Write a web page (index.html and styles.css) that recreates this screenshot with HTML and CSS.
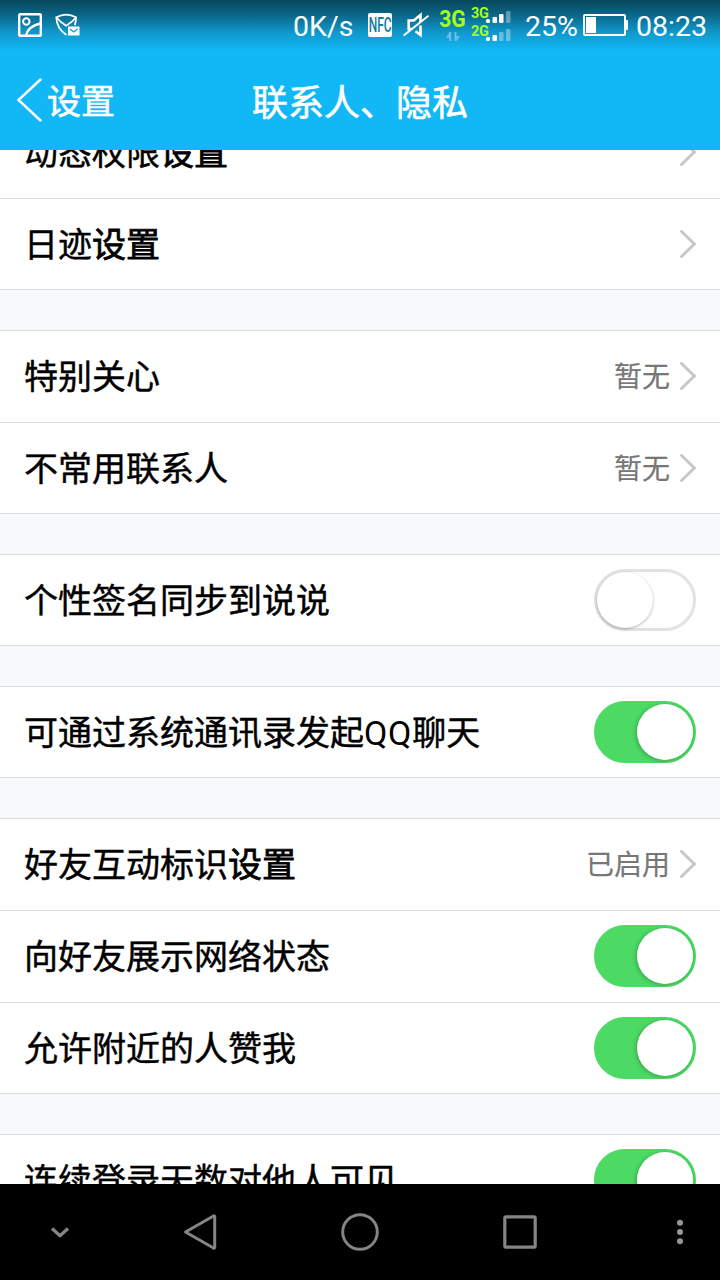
FILE: index.html
```
<!DOCTYPE html>
<html lang="zh-CN">
<head>
  <meta charset="UTF-8">
  <meta name="viewport" content="width=device-width, initial-scale=1.0">
  <title>联系人、隐私</title>
  <link rel="stylesheet" href="styles.css">
</head>
<body>
  <svg class="defs" width="0" height="0">
    <symbol id="arrow" viewBox="0 0 16 28">
      <path d="M1.500 1.500L14.300 14 1.500 26.500" fill="none" stroke="#c7c7c7" stroke-width="3" stroke-linecap="round"/>
    </symbol>
  </svg>
  <div class="screen">
    <header class="header">
      <div class="status-bar">
        <svg class="icon-picture" width="24" height="24" viewBox="0 0 24 24" fill="none" stroke="#fff">
          <rect x="1.200" y="1.200" width="21.600" height="21.600" rx="1" stroke-width="2.400"/>
          <circle cx="8.300" cy="8.500" r="3.200" stroke-width="2"/>
          <path d="M8 22c1.500-5.500 6-9.500 14-11.500" stroke-width="2.400"/>
        </svg>
        <svg class="icon-mail" width="25" height="24" viewBox="0 0 25 24" fill="none" stroke="#fff" stroke-width="1.800">
          <path d="M11.500 22C5.500 18 1.500 11 1.300 4.200 8 .7 14.500.7 21 4.200c0 3-.3 5.500-1.200 8"/>
          <path d="M1.500 4.500c2.500 3 6 6 9.700 8.300 3.700-2.300 7.300-5.300 9.800-8.300" stroke-width="1.800"/>
          <rect x="13" y="13.500" width="11.500" height="9" fill="#fff" stroke="none"/>
          <path d="M15 16l3.800 3 3.700-3" stroke="#1498cc" stroke-width="1.300"/>
        </svg>
        <span class="status-text speed">0K/s</span>
        <span class="nfc"><span>NFC</span></span>
        <svg class="icon-mute" width="26" height="26" viewBox="0 0 26 26" fill="none" stroke="#fff" stroke-width="2.600">
          <path d="M8.500 17H5.700V8.500h5L17.500 3v7M17.500 13.500V23l-5-3.700"/>
          <path d="M.7 23.500L25.500 3.700" stroke-width="2"/>
        </svg>
        <div class="network">
          <span class="net-main">3G</span>
          <svg width="14" height="10" viewBox="0 0 14 10" fill="#68bfe5">
            <path d="M3.300 0h2v9h-2V6H0zM8.500 0h2v4H14l-3.500 5h-2z"/>
          </svg>
        </div>
        <div class="sims">
          <div class="sim">
            <span class="net-sub">3G</span>
            <svg width="25" height="13" viewBox="0 0 25 13" fill="#fff">
              <rect x="0" y="8" width="4" height="4" rx="1.500"/>
              <rect x="6.500" y="6" width="4.500" height="6" rx="1"/>
              <rect x="13" y="3" width="4.500" height="9" rx="1"/>
              <rect x="20" y="0" width="4.500" height="12" rx="1" opacity=".35"/>
            </svg>
          </div>
          <div class="sim">
            <span class="net-sub">2G</span>
            <svg width="25" height="13" viewBox="0 0 25 13" fill="#fff">
              <rect x="0" y="8" width="4" height="4" rx="1.500"/>
              <rect x="6.500" y="6" width="4.500" height="6" rx="1"/>
              <rect x="13" y="3" width="4.500" height="9" rx="1" opacity=".35"/>
              <rect x="20" y="0" width="4.500" height="12" rx="1" opacity=".35"/>
            </svg>
          </div>
        </div>
        <span class="status-text percent">25%</span>
        <svg class="icon-battery" width="45" height="22" viewBox="0 0 45 22">
          <rect x="1" y="1" width="41" height="20" rx="1" fill="none" stroke="#fff" stroke-width="2"/>
          <rect x="3" y="3" width="10" height="16" fill="#fff"/>
          <rect x="42" y="6" width="3" height="10" rx="1" fill="#fff"/>
        </svg>
        <span class="status-text clock">08:23</span>
      </div>
      <div class="title-bar">
        <a class="back">
          <svg width="25" height="44" viewBox="0 0 25 44" fill="none" stroke="#fff" stroke-width="2.400" stroke-linecap="round">
            <path d="M23.500 1.500L1.500 22l22 20.500"/>
          </svg>
          <span>设置</span>
        </a>
        <h1>联系人、隐私</h1>
      </div>
    </header>

    <main class="list">
      <section class="group">
        <div class="row"><span class="label">动态权限<b>设置</b></span><svg class="arrow"><use href="#arrow"/></svg></div>
        <div class="row"><span class="label">日迹<b>设置</b></span><svg class="arrow"><use href="#arrow"/></svg></div>
      </section>
      <section class="group">
        <div class="row"><span class="label">特别关心</span><span class="value">暂无</span><svg class="arrow"><use href="#arrow"/></svg></div>
        <div class="row"><span class="label">不常用联系人</span><span class="value">暂无</span><svg class="arrow"><use href="#arrow"/></svg></div>
      </section>
      <section class="group">
        <div class="row"><span class="label">个性签名同步到说说</span><span class="switch"></span></div>
      </section>
      <section class="group">
        <div class="row"><span class="label">可通过系统通讯录发起<span class="latin">QQ</span>聊天</span><span class="switch on"></span></div>
      </section>
      <section class="group">
        <div class="row"><span class="label">好友互动标识<b>设置</b></span><span class="value">已启用</span><svg class="arrow"><use href="#arrow"/></svg></div>
        <div class="row"><span class="label">向好友展示网络状态</span><span class="switch on"></span></div>
        <div class="row"><span class="label">允许附近的人赞我</span><span class="switch on"></span></div>
      </section>
      <section class="group">
        <div class="row"><span class="label">连续登录天数对他人可见</span><span class="switch on"></span></div>
      </section>
    </main>

    <nav class="nav-bar">
      <svg viewBox="0 0 40 40"><path d="M12 16.500l8 7.300 8-7.300" stroke-width="3.200"/></svg>
      <svg viewBox="0 0 40 40"><path d="M33.500 4L5.500 20l28 16c.7.300 1.200 0 1.200-.8V4.800c0-.8-.5-1.100-1.200-.8z" stroke-width="3"/></svg>
      <svg viewBox="0 0 40 40"><circle cx="20" cy="20" r="17.300" stroke-width="3"/></svg>
      <svg viewBox="0 0 40 40"><rect x="4.800" y="4.800" width="30.400" height="30.400" rx="1.500" stroke-width="3.200"/></svg>
      <svg viewBox="0 0 40 40" class="dots"><circle cx="20" cy="10.700" r="3"/><circle cx="20" cy="20" r="3"/><circle cx="20" cy="29.300" r="3"/></svg>
    </nav>
  </div>
</body>
</html>
```
FILE: styles.css
```
* {
  box-sizing: border-box;
}
body {
  margin: 0;
  font-family: Roboto, "Noto Sans CJK SC", sans-serif;
  background: #000;
}
.defs {
  display: block;
}
.screen {
  width: 720px;
  height: 1280px;
  display: flex;
  flex-direction: column;
  overflow: hidden;
}

/* header */
.header {
  flex: none;
  height: 150px;
  color: #fff;
  background: linear-gradient(#06475a 0, #0a6485 14px, #1097ca 32px, #12b7f5 50px);
}
.status-bar {
  height: 50px;
  display: flex;
  align-items: center;
  padding-left: 18px;
}
.status-bar svg {
  flex: none;
  display: block;
}
.icon-mail {
  margin-left: 13px;
}
.status-text {
  flex: none;
  font-size: 28.500px;
  line-height: 50px;
  padding-top: 3px;
  white-space: nowrap;
}
.speed {
  width: 60px;
  margin-left: 213px;
}
.nfc {
  flex: none;
  width: 24px;
  height: 24px;
  margin-left: 15px;
  border-radius: 2px;
  background: #fff;
  color: #12799f;
  font-size: 20px;
  font-weight: 500;
  line-height: 25px;
  display: flex;
  justify-content: center;
}
.nfc span {
  transform: scaleX(.6);
}
.icon-mute {
  margin-left: 11px;
}
.network {
  flex: none;
  width: 28px;
  height: 50px;
  margin-left: 9px;
  padding-top: 7px;
  display: flex;
  flex-direction: column;
  align-items: center;
}
.network svg {
  margin-left: 2px;
}
.net-main {
  color: #a4ff1c;
  font-size: 23px;
  font-weight: 700;
  line-height: 25px;
  transform: scaleX(.92);
}
.sims {
  flex: none;
  width: 41px;
  height: 50px;
  margin-left: 5px;
  padding-top: 6px;
}
.sim {
  height: 18px;
  display: flex;
  align-items: flex-end;
}
.sim svg {
  margin-left: -2px;
}
.net-sub {
  width: 17px;
  color: #a4ff1c;
  font-size: 14.500px;
  font-weight: 700;
  line-height: 16px;
  padding-bottom: 2px;
  letter-spacing: -.3px;
}
.percent {
  width: 53px;
  margin-left: 13px;
}
.icon-battery {
  margin-left: 5px;
}
.clock {
  margin-left: 8px;
}
.title-bar {
  height: 100px;
  display: grid;
  grid-template-columns: 1fr auto 1fr;
  align-items: center;
}
.back {
  display: flex;
  align-items: center;
  padding-left: 17px;
  font-size: 34px;
  line-height: 48px;
}
.back span {
  margin-left: 5px;
  padding-top: 3px;
  -webkit-text-stroke: .6px;
}
h1 {
  margin: 0;
  font-size: 36px;
  font-weight: 400;
  line-height: 50px;
  padding-top: 7px;
  -webkit-text-stroke: .6px;
}

/* settings list */
.list {
  flex: 1;
  min-height: 0;
  overflow: hidden;
  background: #f7f9fb;
}
.group {
  margin-bottom: 40px;
  border-top: 1px solid #dadbdf;
  background: #fff;
}
.group:first-child {
  margin-top: -44px;
}
.row {
  height: 92px;
  padding: 0 24px;
  display: flex;
  align-items: center;
  border-bottom: 1px solid #dadbdf;
}
.row:last-child {
  height: 91px;
}
.label {
  flex: 1;
  color: #000;
  font-size: 34px;
  line-height: 50px;
  padding-top: 1px;
  -webkit-text-stroke: .45px;
}
.row:last-child .label {
  padding-top: 2px;
}
.label b {
  font-weight: 400;
  -webkit-text-stroke: .8px;
}
.latin {
  letter-spacing: .7px;
  -webkit-text-stroke: 0;
}
.value {
  color: #777;
  font-size: 28px;
  line-height: 40px;
  padding-top: 3px;
  -webkit-text-stroke: .2px;
}
.arrow {
  flex: none;
  width: 16px;
  height: 28px;
  margin: 0 0 1px 10px;
}
.switch {
  width: 102px;
  height: 62px;
  margin-bottom: 1px;
  border-radius: 31px;
  border: 3px solid #e2e2e2;
  background: #fff;
  display: flex;
}
.row:last-child .switch {
  margin-bottom: 0;
}
.switch::before {
  content: "";
  width: 56px;
  height: 56px;
  border-radius: 50%;
  background: #fff;
  box-shadow: 0 1px 3px rgba(0, 0, 0, .3);
}
.switch.on {
  border-color: #4cd964;
  background: #4cd964;
  justify-content: flex-end;
}
.switch.on::before {
  box-shadow: -1px 1px 4px rgba(0, 0, 0, .25);
}

/* bottom keys */
.nav-bar {
  flex: none;
  height: 96px;
  display: grid;
  grid-template-columns: 120px 160px 160px 160px 120px;
  align-items: center;
  justify-items: center;
  background: #000;
}
.nav-bar svg {
  width: 40px;
  height: 40px;
  fill: none;
  stroke: #858585;
  stroke-linejoin: round;
}
.nav-bar .dots {
  margin-left: 40px;
  fill: #969696;
  stroke: none;
}
```
